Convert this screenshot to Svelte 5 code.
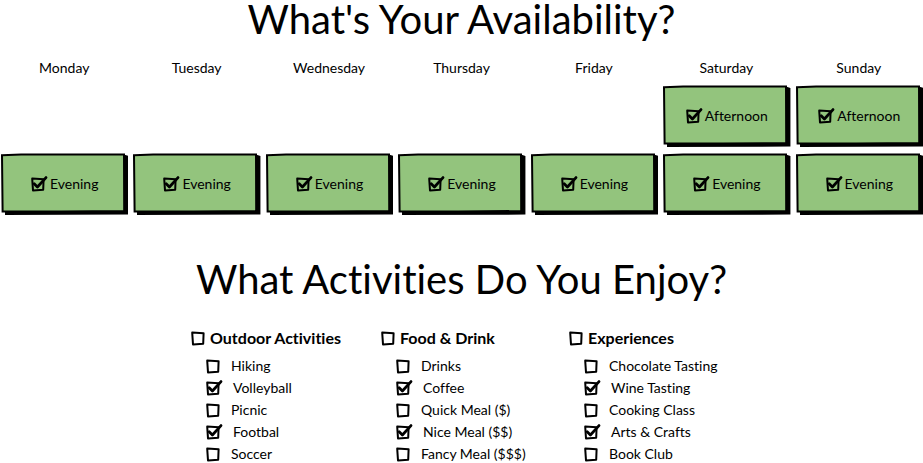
<script>
  const days = ['Monday', 'Tuesday', 'Wednesday', 'Thursday', 'Friday', 'Saturday', 'Sunday'];
  let slots = $state([
    ...['Saturday', 'Sunday'].map((day) => ({ day, time: 'Afternoon', on: true })),
    ...days.map((day) => ({ day, time: 'Evening', on: true }))
  ]);
  const column = (day) => days.indexOf(day) + 1;

  const item = (name, on = false) => ({ name, on });
  let groups = $state([
    {
      title: 'Outdoor Activities',
      on: false,
      items: [item('Hiking'), item('Volleyball', true), item('Picnic'), item('Footbal', true), item('Soccer')]
    },
    {
      title: 'Food & Drink',
      on: false,
      items: [item('Drinks'), item('Coffee', true), item('Quick Meal ($)'), item('Nice Meal ($$)', true), item('Fancy Meal ($$$)')]
    },
    {
      title: 'Experiences',
      on: false,
      items: [item('Chocolate Tasting'), item('Wine Tasting', true), item('Cooking Class'), item('Arts & Crafts', true), item('Book Club')]
    }
  ]);
</script>

{#snippet tick(on)}
  <svg class="tick" class:on viewBox={on ? '0 0 16 16' : '0 0 14 16'} aria-hidden="true">
    <path d="M1.2 2.6 L12.6 3.2 L12.2 13.8 L2 14.4 Z" />
    {#if on}<path class="mark" d="M3.2 7.8 L6.4 11 L15 1.6" />{/if}
  </svg>
{/snippet}

<main>
  <h1>What's Your Availability?</h1>
  <section class="week">
    {#each days as day}
      <h2 class="day">{day}</h2>
    {/each}
    {#each slots as slot}
      <label class="slot" style="grid-column: {column(slot.day)}">
        <svg class="frame" viewBox="0 0 127 63" preserveAspectRatio="none" aria-hidden="true">
          <path d="M4 4 L124 2 L127 3 L127 61.6 L4 62 Z" />
          <path class="face" d="M1 2.2 L20 1.4 L122.6 1.6 L122.8 58 L60 58.6 L1.6 58.6 Z" />
        </svg>
        <input type="checkbox" bind:checked={slot.on} />
        {@render tick(slot.on)}
        <span>{slot.time}</span>
      </label>
    {/each}
  </section>

  <h1>What Activities Do You Enjoy?</h1>
  <section class="groups">
    {#each groups as group}
      <div>
        <label class="title">
          <input type="checkbox" bind:checked={group.on} />
          {@render tick(group.on)}
          <span>{group.title}</span>
        </label>
        <ul>
          {#each group.items as entry}
            <li>
              <label>
                <input type="checkbox" bind:checked={entry.on} />
                {@render tick(entry.on)}
                <span>{entry.name}</span>
              </label>
            </li>
          {/each}
        </ul>
      </div>
    {/each}
  </section>
</main>

<style>
  :global(body) {
    background: #fff;
  }
  main {
    color: #000;
    font-family: Lato, 'Open Sans', sans-serif;
    font-size: 14px;
    line-height: 22px;
    font-variant-ligatures: none;
  }
  h1 {
    margin: 0;
    font-size: 40px;
    line-height: 38px;
    font-weight: 400;
    text-align: center;
  }
  .week {
    display: grid;
    grid-template-columns: repeat(7, minmax(0, 1fr));
    gap: 5px;
    padding: 19px 0 44px 1px;
  }
  .day {
    margin: 0;
    padding: 0 1px 1px 0;
    font-size: 14px;
    line-height: 22px;
    font-weight: 400;
    text-align: center;
  }
  label {
    position: relative;
    display: flex;
    align-items: center;
    cursor: pointer;
  }
  input {
    position: absolute;
    inset: 0;
    width: 100%;
    height: 100%;
    margin: 0;
    opacity: 0;
    cursor: pointer;
  }
  .slot {
    height: 63px;
    padding-bottom: 2px;
    box-sizing: border-box;
    justify-content: center;
    gap: 3px;
  }
  .slot .tick,
  .slot span {
    position: relative;
    pointer-events: none;
  }
  .frame {
    position: absolute;
    inset: 0;
    width: 100%;
    height: 100%;
  }
  .face {
    fill: #93c47d;
    stroke: #000;
    stroke-width: 2;
  }
  .tick {
    flex: none;
    width: 14px;
    height: 16px;
    overflow: visible;
    fill: none;
    stroke: #000;
    stroke-width: 2;
    stroke-linejoin: round;
    stroke-linecap: round;
  }
  .tick.on {
    width: 16px;
  }
  .mark {
    stroke-width: 2.8;
  }
  .groups {
    display: grid;
    grid-template-columns: 190px 188px auto;
    width: 541px;
    max-width: 100%;
    margin: 0 auto;
    padding-top: 29px;
    white-space: nowrap;
  }
  .title {
    gap: 5px;
    font-size: 16px;
    font-weight: 700;
  }
  ul {
    margin: 0;
    padding: 6px 0 0 15px;
    list-style: none;
  }
  li label {
    gap: 11px;
  }
</style>
